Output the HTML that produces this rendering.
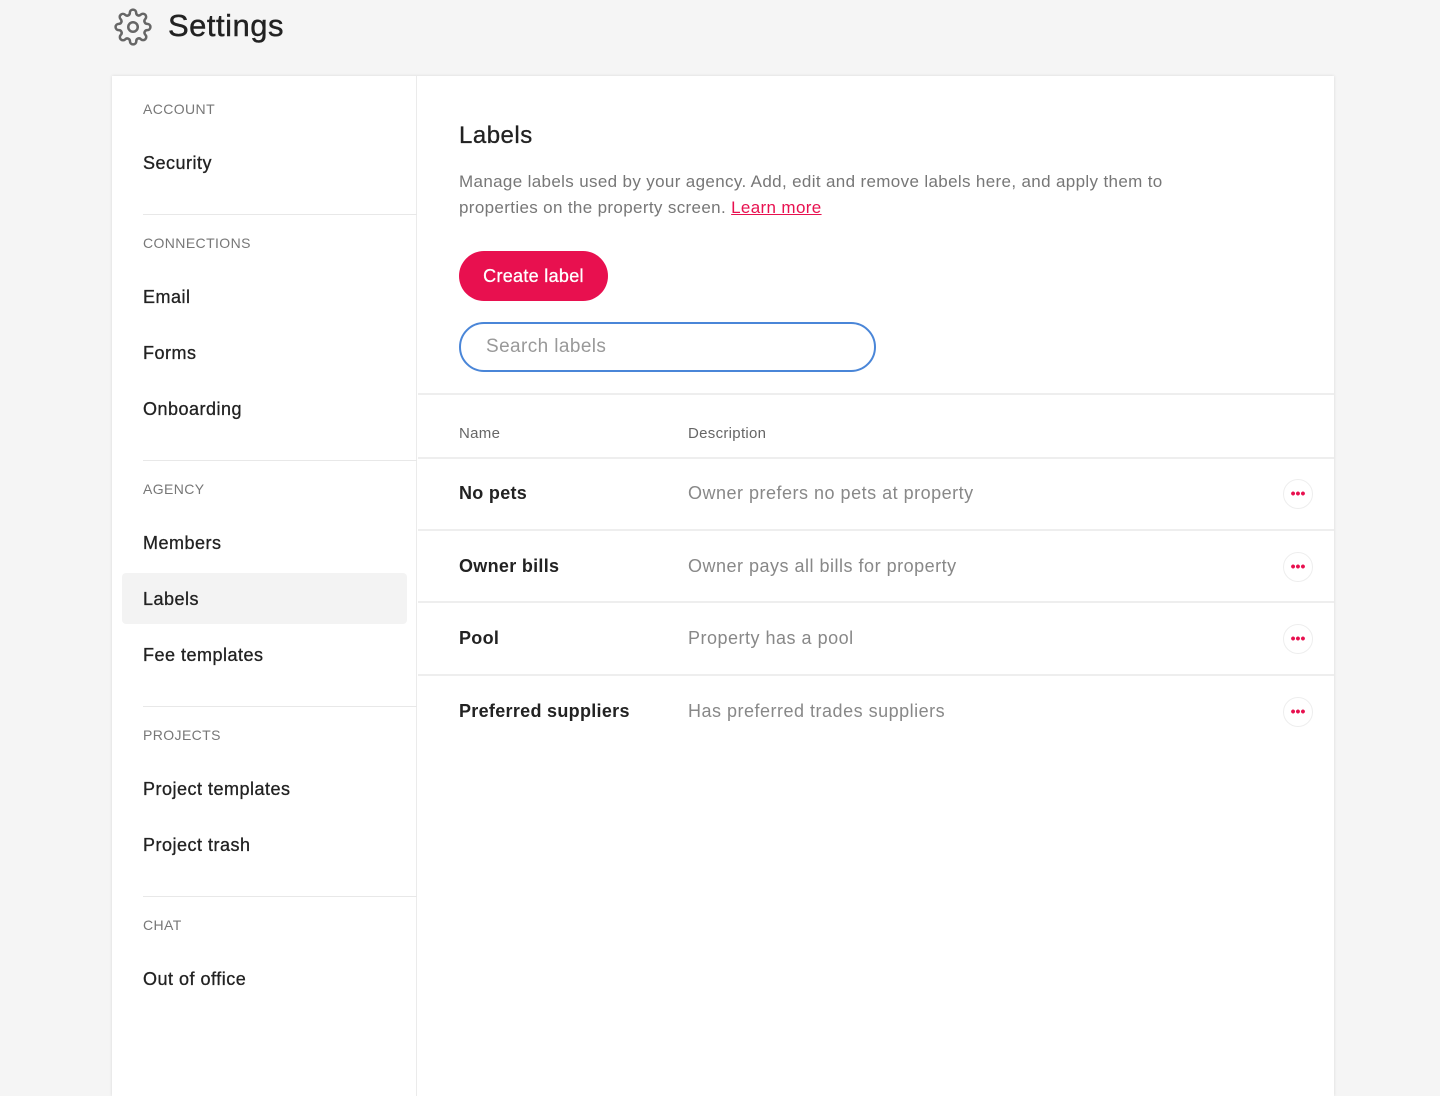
<!DOCTYPE html>
<html><head><meta charset="utf-8"><style>
*{margin:0;padding:0;box-sizing:border-box}
body{width:1440px;height:1083px;background:#f5f5f5;font-family:"Liberation Sans",sans-serif;color:#222;position:relative;overflow:hidden}
.a{position:absolute;white-space:nowrap}
.card{position:absolute;left:112px;top:76px;width:1222px;height:1020px;background:#fff;box-shadow:0 0 3px rgba(0,0,0,.12)}
.side{position:absolute;left:112px;top:76px;width:305px;height:1020px;border-right:1px solid #ebebeb}
.h{font-size:14px;color:#777;letter-spacing:.4px;left:143px}
.it{font-size:18px;color:#222;left:143px;letter-spacing:.5px;-webkit-text-stroke:.3px #222}
.sep{position:absolute;left:143px;width:274px;height:1px;background:#e8e8e8}
.hl{position:absolute;left:418px;width:916px;height:2px;background:#eee}
.nm{font-size:18px;font-weight:bold;left:459px;color:#222;letter-spacing:.3px}
.ds{font-size:18px;left:688px;color:#888;letter-spacing:.5px}
.dot{position:absolute;left:1283px;width:30px;height:30px;border-radius:50%;border:1px solid #eee;color:#e8104f;font-size:14px;text-align:center;line-height:26px;font-weight:bold;letter-spacing:0}
</style></head><body>
<svg class="a" style="left:114px;top:8px" width="38" height="38" viewBox="0 0 24 24" fill="none" stroke="#666" stroke-width="1.6"><circle cx="12" cy="12" r="3"/><path d="M19.4 15a1.65 1.65 0 0 0 .33 1.820l.06.06a2 2 0 1 1-2.83 2.83l-.06-.06a1.65 1.65 0 0 0-1.820-.33 1.65 1.65 0 0 0-1 1.510V21a2 2 0 1 1-4 0v-.09A1.65 1.65 0 0 0 9 19.4a1.65 1.65 0 0 0-1.820.33l-.06.06a2 2 0 1 1-2.83-2.830l.06-.06A1.65 1.65 0 0 0 4.68 15a1.65 1.65 0 0 0-1.510-1H3a2 2 0 1 1 0-4h.09A1.65 1.65 0 0 0 4.6 9a1.65 1.65 0 0 0-.33-1.820l-.06-.06a2 2 0 1 1 2.83-2.830l.06.06A1.65 1.65 0 0 0 9 4.68a1.65 1.65 0 0 0 1-1.510V3a2 2 0 1 1 4 0v.09a1.65 1.65 0 0 0 1 1.510 1.65 1.65 0 0 0 1.820-.33l.06-.06a2 2 0 1 1 2.830 2.830l-.06.06A1.65 1.65 0 0 0 19.4 9a1.65 1.65 0 0 0 1.510 1H21a2 2 0 1 1 0 4h-.09a1.65 1.65 0 0 0-1.510 1z"/></svg>
<div class="a" style="left:168px;top:8px;font-size:31px;color:#222;letter-spacing:.5px;-webkit-text-stroke:.4px #222">Settings</div>
<div class="card"></div>
<div class="side"></div>
<div class="a h" style="top:101px">ACCOUNT</div>
<div class="a it" style="top:153px">Security</div>
<div class="sep" style="top:214px"></div>
<div class="a h" style="top:235px">CONNECTIONS</div>
<div class="a it" style="top:287px">Email</div>
<div class="a it" style="top:343px">Forms</div>
<div class="a it" style="top:399px">Onboarding</div>
<div class="sep" style="top:460px"></div>
<div class="a h" style="top:481px">AGENCY</div>
<div class="a it" style="top:533px">Members</div>
<div class="a" style="left:122px;top:573px;width:285px;height:51px;background:#f3f3f3;border-radius:4px"></div>
<div class="a it" style="top:589px">Labels</div>
<div class="a it" style="top:645px">Fee templates</div>
<div class="sep" style="top:706px"></div>
<div class="a h" style="top:727px">PROJECTS</div>
<div class="a it" style="top:779px">Project templates</div>
<div class="a it" style="top:835px">Project trash</div>
<div class="sep" style="top:896px"></div>
<div class="a h" style="top:917px">CHAT</div>
<div class="a it" style="top:969px">Out of office</div>

<div class="a" style="left:459px;top:122px;font-size:24px;color:#222;letter-spacing:.5px;-webkit-text-stroke:.3px #222">Labels</div>
<div class="a" style="left:459px;top:169px;font-size:17px;color:#777;line-height:26px;white-space:normal;width:770px;letter-spacing:.35px">Manage labels used by your agency. Add, edit and remove labels here, and apply them to properties on the property screen. <span style="color:#e8104f;text-decoration:underline">Learn more</span></div>
<div class="a" style="left:459px;top:251px;width:149px;height:50px;border-radius:25px;background:#e8104f;color:#fff;font-size:18px;text-align:center;line-height:50px;letter-spacing:.3px;-webkit-text-stroke:.3px #fff">Create label</div>
<div class="a" style="left:459px;top:322px;width:417px;height:50px;border-radius:25px;border:2px solid #4a86d8;color:#999;font-size:19px;line-height:46px;padding-left:25px;letter-spacing:.4px">Search labels</div>
<div class="hl" style="top:393px"></div>
<div class="a" style="left:459px;top:425px;font-size:15px;color:#666;letter-spacing:.3px">Name</div>
<div class="a" style="left:688px;top:425px;font-size:15px;color:#666;letter-spacing:.3px">Description</div>
<div class="hl" style="top:457px"></div>
<div class="a nm" style="top:483px">No pets</div><div class="a ds" style="top:483px">Owner prefers no pets at property</div><div class="dot" style="top:479px">•••</div>
<div class="hl" style="top:529px"></div>
<div class="a nm" style="top:556px">Owner bills</div><div class="a ds" style="top:556px">Owner pays all bills for property</div><div class="dot" style="top:552px">•••</div>
<div class="hl" style="top:601px"></div>
<div class="a nm" style="top:628px">Pool</div><div class="a ds" style="top:628px">Property has a pool</div><div class="dot" style="top:624px">•••</div>
<div class="hl" style="top:674px"></div>
<div class="a nm" style="top:701px">Preferred suppliers</div><div class="a ds" style="top:701px">Has preferred trades suppliers</div><div class="dot" style="top:697px">•••</div>
</body></html>
